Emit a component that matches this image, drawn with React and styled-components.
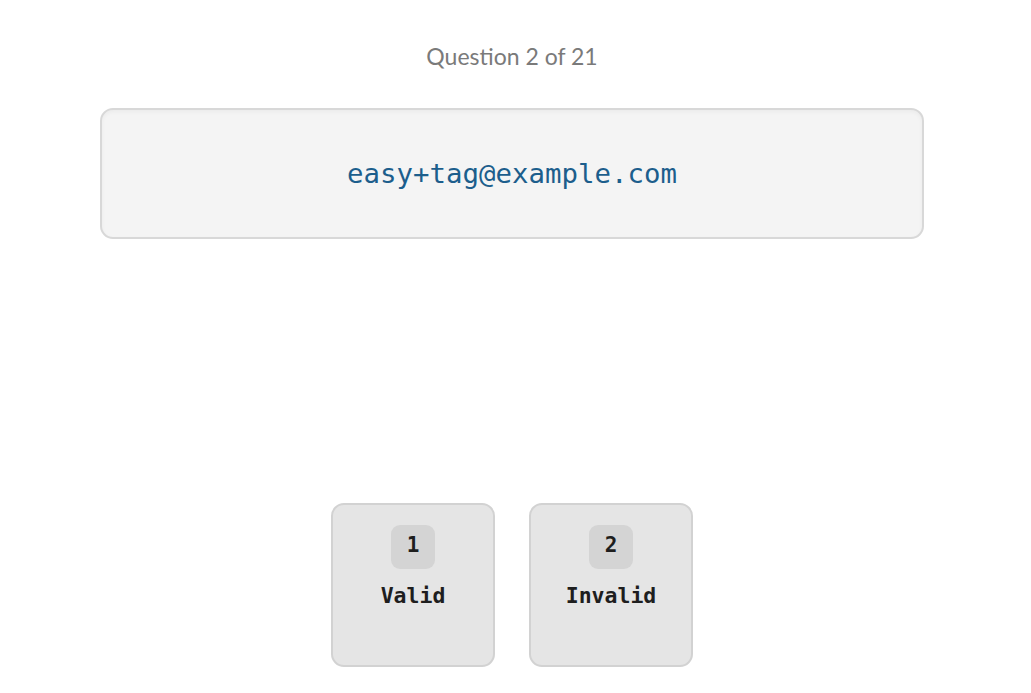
import React from "react";
import styled, { createGlobalStyle } from "styled-components";

const mono = `"DejaVu Sans Mono", "Liberation Mono", monospace`;

const GlobalStyle = createGlobalStyle`
  html, body {
    margin: 0;
    padding: 0;
    background: #ffffff;
  }
`;

const Page = styled.main`
  width: 1024px;
  height: 693px;
  display: flex;
  flex-direction: column;
  align-items: center;
  box-sizing: border-box;
  padding-top: 41px;
`;

const Progress = styled.div`
  font-family: "Century Gothic", Lato, sans-serif;
  font-size: 23px;
  font-weight: 400;
  color: #7a7a7a;
  height: 30px;
  line-height: 30px;
`;

const Prompt = styled.section`
  margin-top: 37px;
  width: 824px;
  height: 131px;
  box-sizing: border-box;
  border: 2px solid #d8d8d8;
  border-radius: 13px;
  background: #f4f4f4;
  box-shadow: inset 0 2px 4px rgba(0, 0, 0, 0.04);
  display: flex;
  align-items: center;
  justify-content: center;
`;

const Email = styled.code`
  font-family: ${mono};
  font-size: 27.4px;
  color: #1c5e8c;
`;

const Choices = styled.div`
  margin-top: auto;
  margin-bottom: 26px;
  display: flex;
  gap: 34px;
`;

const Choice = styled.button`
  width: 164px;
  height: 164px;
  box-sizing: border-box;
  border: 2px solid #d2d2d2;
  border-radius: 13px;
  background: #e5e5e5;
  display: flex;
  flex-direction: column;
  align-items: center;
  padding: 20px 0 0;
  cursor: pointer;
`;

const Key = styled.span`
  width: 44px;
  height: 44px;
  box-sizing: border-box;
  padding-bottom: 5px;
  border-radius: 9px;
  background: #d4d4d4;
  display: flex;
  align-items: center;
  justify-content: center;
  font-family: ${mono};
  font-weight: 700;
  font-size: 21px;
  color: #1e1e1e;
`;

const Label = styled.span`
  margin-top: 14px;
  font-family: ${mono};
  font-weight: 700;
  font-size: 21.5px;
  color: #1e1e1e;
`;

const options = [
  { key: "1", label: "Valid" },
  { key: "2", label: "Invalid" },
];

export default function App() {
  return (
    <Page>
      <GlobalStyle />
      <Progress>Question 2 of 21</Progress>
      <Prompt>
        <Email>easy+tag@example.com</Email>
      </Prompt>
      <Choices>
        {options.map((o) => (
          <Choice key={o.key}>
            <Key>{o.key}</Key>
            <Label>{o.label}</Label>
          </Choice>
        ))}
      </Choices>
    </Page>
  );
}
